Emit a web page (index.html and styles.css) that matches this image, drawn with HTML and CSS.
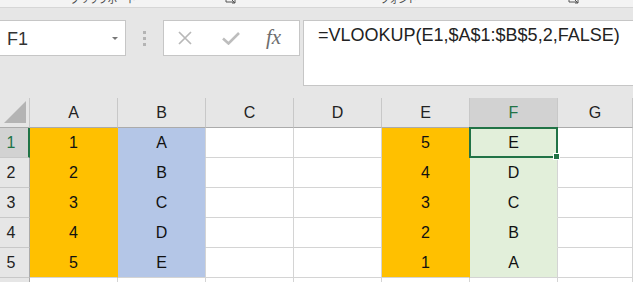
FILE: index.html
```html
<!DOCTYPE html>
<html>

<head>
  <title>VLOOKUP</title>
  <link rel="stylesheet" href="styles.css">
</head>

<body>
  <!-- bottom edge of the ribbon, mostly scrolled out of view -->
  <div class="ribbon">
    <span class="group-label clip">クリップボード</span>
    <svg class="launcher" width="13" height="10" viewBox="0 0 13 10"><path d="M1 0v8h8M5 4l5 5M7 9h3V6" fill="none" stroke="#555" stroke-width="1"/></svg>
    <span class="group-label font">フォント</span>
    <svg class="launcher last" width="13" height="10" viewBox="0 0 13 10"><path d="M1 0v8h8M5 4l5 5M7 9h3V6" fill="none" stroke="#555" stroke-width="1"/></svg>
  </div>

  <div class="formula-area">
    <div class="name-box">
      <span>F1</span>
      <span class="drop"></span>
    </div>
    <div class="grip">
      <span></span><span></span><span></span>
    </div>
    <div class="fx-buttons">
      <svg class="cancel" width="14" height="14" viewBox="0 0 14 14"><path d="M1 1L13 13M13 1L1 13" stroke="#b8b8b8" stroke-width="1.7"/></svg>
      <svg class="enter" width="18" height="13" viewBox="0 0 18 13"><path d="M1 6.5L6.5 11.5L17 1" fill="none" stroke="#bdbdbd" stroke-width="2.6"/></svg>
      <span class="fx">fx</span>
    </div>
    <div class="formula-input">=VLOOKUP(E1,$A$1:$B$5,2,FALSE)</div>
  </div>

  <div class="sheet">
    <div class="c corner"><svg width="29" height="29" viewBox="0 0 29 29"><polygon points="4,25 26,25 26,3" fill="#b4b4b4"/></svg></div>
    <div class="c hd">A</div>
    <div class="c hd">B</div>
    <div class="c hd">C</div>
    <div class="c hd">D</div>
    <div class="c hd">E</div>
    <div class="c hd active">F</div>
    <div class="c hd">G</div>

    <div class="c rh active">1</div>
    <div class="c o">1</div>
    <div class="c b">A</div>
    <div class="c"></div>
    <div class="c"></div>
    <div class="c o">5</div>
    <div class="c g sel">E</div>
    <div class="c"></div>

    <div class="c rh">2</div>
    <div class="c o">2</div>
    <div class="c b">B</div>
    <div class="c"></div>
    <div class="c"></div>
    <div class="c o">4</div>
    <div class="c g">D</div>
    <div class="c"></div>

    <div class="c rh">3</div>
    <div class="c o">3</div>
    <div class="c b">C</div>
    <div class="c"></div>
    <div class="c"></div>
    <div class="c o">3</div>
    <div class="c g">C</div>
    <div class="c"></div>

    <div class="c rh">4</div>
    <div class="c o">4</div>
    <div class="c b">D</div>
    <div class="c"></div>
    <div class="c"></div>
    <div class="c o">2</div>
    <div class="c g">B</div>
    <div class="c"></div>

    <div class="c rh">5</div>
    <div class="c o end">5</div>
    <div class="c b end">E</div>
    <div class="c"></div>
    <div class="c"></div>
    <div class="c o end">1</div>
    <div class="c g end">A</div>
    <div class="c"></div>

    <!-- next row only peeks in at the bottom -->
    <div class="c rh"></div>
    <div class="c"></div>
    <div class="c"></div>
    <div class="c"></div>
    <div class="c"></div>
    <div class="c"></div>
    <div class="c"></div>
    <div class="c"></div>
  </div>
</body>

</html>
```

FILE: styles.css
```css
body {
  margin: 0;
  width: 633px;
  height: 282px;
  overflow: hidden;
  background: #e6e6e6;
  font-family: "Liberation Sans", Arial, sans-serif;
}

/* ribbon edge */
.ribbon {
  height: 7px;
  background: #f3f3f3;
  border-bottom: 1px solid #d6d6d6;
  display: flex;
  align-items: flex-end;
  overflow: hidden;
  font-family: "Noto Sans CJK JP", sans-serif;
  font-size: 10px;
  color: #444;
}
.group-label {
  line-height: 12px;
  margin-bottom: 2px;
  white-space: nowrap;
  flex: none;
}
.clip {
  margin-left: 70px;
  width: 155px;
  letter-spacing: -0.6px;
}
.font {
  margin-left: 142px;
  width: 188px;
  letter-spacing: -1px;
}
.launcher {
  flex: none;
  margin-bottom: 3px;
}

/* name box + formula bar */
.formula-area {
  display: flex;
  align-items: flex-start;
  height: 90px;
  padding-top: 12px;
  box-sizing: border-box;
}
.name-box {
  width: 126px;
  height: 36px;
  box-sizing: border-box;
  border: 1px solid #c6c6c6;
  border-left: 0;
  background: #fff;
  display: flex;
  align-items: center;
  padding: 2px 0 0 7px;
  font-size: 18px;
  color: #333;
}
.drop {
  margin-left: auto;
  margin-right: 7px;
  margin-top: -2px;
  border-left: 3px solid transparent;
  border-right: 3px solid transparent;
  border-top: 3px solid #777;
}
.grip {
  width: 37px;
  display: flex;
  flex-direction: column;
  align-items: center;
  gap: 3px;
  padding-top: 11px;
}
.grip span {
  width: 3px;
  height: 3px;
  background: #b4b4b4;
}
.fx-buttons {
  width: 137px;
  height: 36px;
  box-sizing: border-box;
  border: 1px solid #c6c6c6;
  background: #fff;
  display: flex;
  align-items: center;
}
.cancel {
  margin-left: 14px;
}
.enter {
  margin-left: 30px;
  margin-top: 1px;
}
.fx {
  margin-left: 26px;
  font-family: "Liberation Serif", serif;
  font-style: italic;
  font-size: 21px;
  color: #6e6e6e;
  margin-top: -1px;
}
.formula-input {
  flex: 1;
  margin-left: 3px;
  height: 66px;
  box-sizing: border-box;
  border: 1px solid #c6c6c6;
  border-right: 0;
  background: #fff;
  padding: 2px 0 0 14px;
  font-size: 18px;
  line-height: 24px;
  color: #222;
}

/* grid */
.sheet {
  display: grid;
  grid-template-columns: 30px repeat(6, 88px) 75px;
  grid-auto-rows: 30px;
}
.c {
  box-sizing: border-box;
  border-right: 1px solid #d4d4d4;
  border-bottom: 1px solid #d4d4d4;
  background: #fff;
  display: flex;
  align-items: center;
  justify-content: center;
  font-size: 16px;
  color: #111;
}
.corner {
  background: #e6e6e6;
  border-right-color: #c8c8c8;
  border-bottom-color: #ababab;
}
.hd {
  background: #e6e6e6;
  border-right-color: #c8c8c8;
  border-bottom-color: #ababab;
  color: #222;
}
.rh {
  background: #e6e6e6;
  border-right-color: #ababab;
  border-bottom-color: #c8c8c8;
  padding-right: 7px;
  color: #222;
}
.hd.active,
.rh.active {
  background: #d2d2d2;
  color: #217346;
}
.rh.active {
  border-right: 2px solid #217346;
  padding-right: 6px;
}
.o {
  background: #ffc000;
  border-right-color: #ffc000;
  border-bottom-color: #ffc000;
}
.b {
  background: #b4c6e7;
  border-bottom-color: #b4c6e7;
}
.g {
  background: #e2efda;
  border-bottom-color: #e2efda;
}
.c.end {
  border-bottom-color: #d4d4d4;
}
.sel {
  position: relative;
}
.sel::before {
  content: "";
  position: absolute;
  top: -1px;
  left: -1px;
  right: -1px;
  bottom: -1px;
  border: 2px solid #217346;
}
.sel::after {
  content: "";
  position: absolute;
  left: 84px;
  top: 26px;
  width: 5px;
  height: 5px;
  background: #217346;
  box-shadow: 0 0 0 1px #fff;
}
```
